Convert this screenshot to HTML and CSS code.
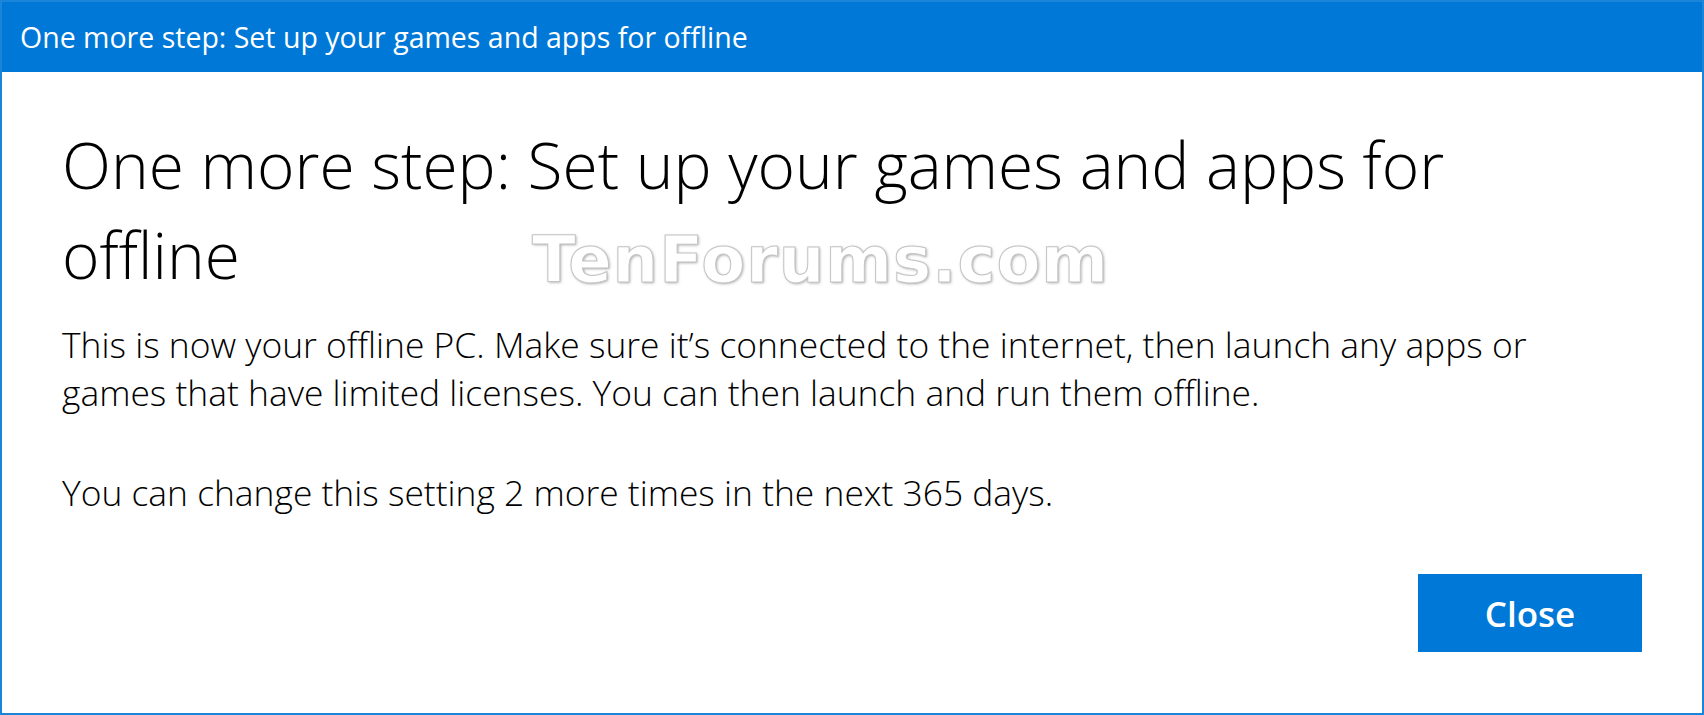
FILE: index.html
```html
<!DOCTYPE html>
<html lang="en">
<head>
    <meta charset="UTF-8">
    <meta name="viewport" content="width=device-width, initial-scale=1.0">
    <title>One more step</title>
    <link rel="stylesheet" href="styles.css">
</head>
<body>
    <div class="window">
        <div class="titlebar">One more step: Set up your games and apps for offline</div>

        <div class="content">
            <h1 class="heading">One more step: Set up your games and apps for offline</h1>

            <p class="message">This is now your offline PC. Make sure it’s connected to the internet, then launch any apps or games that have limited licenses. You can then launch and run them offline.</p>

            <p class="message message-note">You can change this setting 2 more times in the next 365 days.</p>

            <div class="actions">
                <button type="button" class="btn-close">Close</button>
            </div>
        </div>

        <div class="watermark">TenForums.com</div>
    </div>
</body>
</html>
```

FILE: styles.css
```css
/* General Reset */
body, html {
    margin: 0;
    padding: 0;
    background: #fff;
    font-family: 'Open Sans', 'Noto Sans', sans-serif;
    color: #000;
}

.window {
    position: relative;
    width: 1704px;
    height: 715px;
    box-sizing: border-box;
    border: 2px solid #1b86d9;
    background: #fff;
    display: flex;
    flex-direction: column;
}

.titlebar {
    height: 70px;
    background: #0078d7;
    color: #fff;
    font-size: 28.5px;
    line-height: 70px;
    padding-left: 18px;
    white-space: nowrap;
}

.content {
    flex: 1;
    padding: 48px 60px 0 60px;
    display: flex;
    flex-direction: column;
}

.heading {
    margin: 0;
    font-size: 64px;
    font-weight: 300;
    line-height: 90px;
    width: 1460px;
}

.message {
    margin: 20px 0 0 0;
    font-size: 35.4px;
    font-weight: 300;
    line-height: 48px;
    width: 1500px;
}

.message-note {
    margin-top: 52px;
}

.actions {
    display: flex;
    justify-content: flex-end;
    margin-top: 58px;
}

.btn-close {
    width: 224px;
    height: 78px;
    border: none;
    border-radius: 0;
    background: #0078d7;
    color: #fff;
    font-family: 'Open Sans', 'Noto Sans', sans-serif;
    font-size: 35px;
    font-weight: 600;
    cursor: pointer;
}

/* watermark sits over the dialog text */
.watermark {
    position: absolute;
    left: 530px;
    top: 221px;
    font-family: 'DejaVu Sans', 'Liberation Sans', sans-serif;
    font-weight: bold;
    font-size: 64px;
    letter-spacing: 1px;
    color: #fff;
    -webkit-text-stroke: 1px #c4c4c4;
    text-shadow: 1px 1px 3px rgba(0, 0, 0, 0.35);
    pointer-events: none;
}
```
